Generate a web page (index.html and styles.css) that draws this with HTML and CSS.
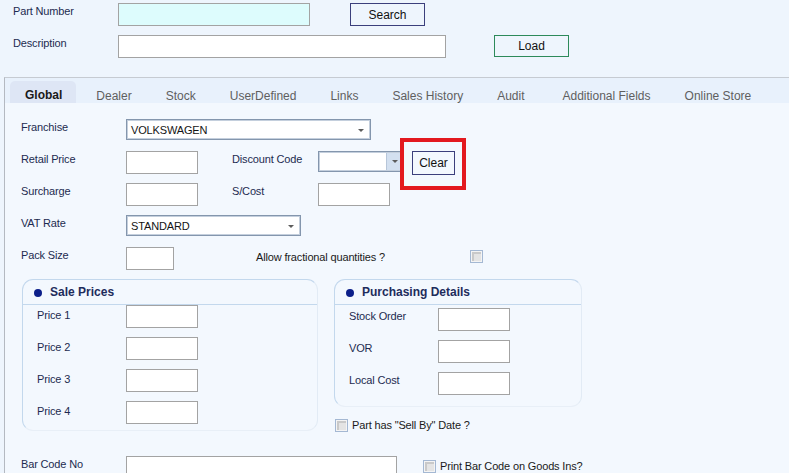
FILE: index.html
```html
<!DOCTYPE html>
<html>
<head>
<meta charset="utf-8">
<link rel="stylesheet" href="styles.css">
</head>
<body>
<div class="top">
  <div class="top-row">
    <div class="top-label">Part Number</div>
    <div class="field field-part"></div>
    <button class="btn btn-search">Search</button>
  </div>
  <div class="top-row">
    <div class="top-label">Description</div>
    <div class="field field-desc"></div>
    <button class="btn btn-load">Load</button>
  </div>
</div>

<div class="panel">
  <div class="tabstrip">
    <div class="tab tab-active">Global</div>
    <div class="tab">Dealer</div>
    <div class="tab">Stock</div>
    <div class="tab">UserDefined</div>
    <div class="tab">Links</div>
    <div class="tab">Sales History</div>
    <div class="tab tab-audit">Audit</div>
    <div class="tab">Additional Fields</div>
    <div class="tab">Online Store</div>
  </div>

  <div class="content">
    <div class="row">
      <div class="lbl">Franchise</div>
      <div class="combo combo-franchise"><span class="combo-text">VOLKSWAGEN</span><span class="arrow"></span></div>
    </div>
    <div class="row">
      <div class="lbl">Retail Price</div>
      <div class="field field-sm"></div>
      <div class="lbl lbl-mid">Discount Code</div>
      <div class="combo combo-discount"><span class="combo-text"></span><span class="drop"><span class="arrow"></span></span></div>
      <button class="btn btn-clear">Clear</button>
    </div>
    <div class="row">
      <div class="lbl">Surcharge</div>
      <div class="field field-sm"></div>
      <div class="lbl lbl-mid">S/Cost</div>
      <div class="field field-sm"></div>
    </div>
    <div class="row">
      <div class="lbl">VAT Rate</div>
      <div class="combo combo-vat"><span class="combo-text">STANDARD</span><span class="arrow"></span></div>
    </div>
    <div class="row">
      <div class="lbl">Pack Size</div>
      <div class="field field-xs"></div>
      <div class="lbl lbl-frac">Allow fractional quantities ?</div>
      <span class="check check-frac"></span>
    </div>

    <div class="groups">
      <div class="group group-sale">
        <div class="group-head"><span class="dot"></span>Sale Prices</div>
        <div class="group-body">
          <div class="grow"><div class="glbl">Price 1</div><div class="field field-sm"></div></div>
          <div class="grow"><div class="glbl">Price 2</div><div class="field field-sm"></div></div>
          <div class="grow"><div class="glbl">Price 3</div><div class="field field-sm"></div></div>
          <div class="grow"><div class="glbl">Price 4</div><div class="field field-sm"></div></div>
        </div>
      </div>
      <div class="col-right">
        <div class="group group-purch">
          <div class="group-head"><span class="dot"></span>Purchasing Details</div>
          <div class="group-body">
            <div class="grow"><div class="glbl glbl-top">Stock Order</div><div class="field field-sm"></div></div>
            <div class="grow"><div class="glbl glbl-top">VOR</div><div class="field field-sm"></div></div>
            <div class="grow"><div class="glbl glbl-top">Local Cost</div><div class="field field-sm"></div></div>
          </div>
        </div>
        <div class="checkrow"><span class="check"></span><span class="check-lbl">Part has "Sell By" Date ?</span></div>
      </div>
    </div>

    <div class="row row-bar">
      <div class="lbl">Bar Code No</div>
      <div class="field field-bar"></div>
      <div class="checkrow checkrow-bar"><span class="check"></span><span class="check-lbl">Print Bar Code on Goods Ins?</span></div>
    </div>
  </div>
</div>

<div class="highlight"></div>
</body>
</html>
```

FILE: styles.css
```css
html, body {
  margin: 0;
  padding: 0;
}
body {
  position: relative;
  width: 789px;
  height: 473px;
  overflow: hidden;
  background: #eef5fd;
  font-family: "Liberation Sans", Arial, sans-serif;
  font-size: 11px;
  letter-spacing: -0.15px;
  color: #1d2b50;
}

/* ---------- top search area ---------- */
.top {
  padding: 3px 0 0 13px;
}
.top-row {
  display: flex;
  align-items: flex-start;
  height: 23px;
}
.top-row + .top-row {
  margin-top: 9px;
}
.top-label {
  width: 105px;
  line-height: 14px;
  margin-top: 1px;
}
.field {
  box-sizing: border-box;
  height: 23px;
  background: #ffffff;
  border: 1px solid #a3a3a3;
  flex: none;
}
.field-part {
  width: 192px;
  background: #ddfcfd;
}
.field-desc {
  width: 328px;
}
.btn {
  box-sizing: border-box;
  font-family: "Liberation Sans", Arial, sans-serif;
  font-size: 12px;
  letter-spacing: 0;
  color: #111;
  background: transparent;
  padding: 0;
  flex: none;
}
.btn-search {
  margin-left: 40px;
  width: 75px;
  height: 23px;
  border: 1px solid #3b3f7c;
}
.btn-load {
  margin-left: 48px;
  width: 75px;
  height: 22px;
  border: 1px solid #2d8a5b;
}

/* ---------- tab panel ---------- */
.panel {
  margin-top: 19px;
  margin-left: 4px;
  border-top: 1px solid #c6cbd2;
  border-left: 1px solid #b4b9c1;
  background: #f3f8fe;
  height: 400px;
}
.tabstrip {
  display: flex;
  align-items: flex-end;
  height: 25px;
  background: #e8f1fc;
  padding-left: 5px;
  font-size: 12px;
  letter-spacing: 0;
  color: #5f5f5f;
}
.tab {
  box-sizing: border-box;
  height: 22px;
  line-height: 14px;
  padding: 8px 17px 0 17px;
  white-space: nowrap;
}
.tab-audit {
  padding-right: 21px;
}
.tab-active {
  padding: 7px 14px 0 15px;
  margin-right: 3px;
  background: #dee6f5;
  border-radius: 5px 5px 0 0;
  font-weight: bold;
  color: #1a1a1a;
}

.content {
  padding: 16px 0 0 16px;
}
.row {
  display: flex;
  align-items: flex-start;
  height: 23px;
  margin-bottom: 9px;
}
.lbl {
  width: 105px;
  line-height: 14px;
  margin-top: 1px;
  flex: none;
}
.lbl-mid {
  width: 86px;
  margin-left: 34px;
}
.lbl-frac {
  width: 214px;
  margin-left: 82px;
  margin-top: 3px;
  color: #1a1a1a;
}
.field-sm {
  width: 72px;
}
.field-xs {
  width: 48px;
}
.field-bar {
  width: 271px;
}

/* combos */
.combo {
  box-sizing: border-box;
  height: 21px;
  border: 1px solid #8496ad;
  box-shadow: inset 0 0 0 1px #c4cfdd;
  background: #ffffff;
  display: flex;
  align-items: center;
  flex: none;
}
.combo-text {
  flex: 1;
  padding-left: 4px;
  font-size: 11px;
  color: #141414;
  line-height: 14px;
}
.combo .arrow {
  width: 0;
  height: 0;
  border-left: 3px solid transparent;
  border-right: 3px solid transparent;
  border-top: 3px solid #5c5c5c;
  margin-right: 6px;
  margin-top: 1px;
}
.combo-franchise {
  width: 245px;
}
.combo-vat {
  width: 175px;
}
.combo-discount {
  width: 86px;
}
.drop {
  align-self: stretch;
  width: 15px;
  margin: 1px 1px 1px 0;
  background: #d3e0f0;
  border-left: 1px solid #b7c6d9;
  display: flex;
  align-items: center;
  justify-content: center;
}
.drop .arrow {
  margin: 0;
}
.btn-clear {
  margin-left: 8px;
  width: 43px;
  height: 24px;
  border: 1px solid #3b3f7c;
}

/* checkboxes */
.check {
  box-sizing: border-box;
  display: inline-block;
  width: 13px;
  height: 13px;
  border: 1px solid #a4b8d3;
  background: #e4e4e4;
  box-shadow: inset 0 0 0 1px #f4f4f4, inset 1px 1px 0 2px #c9c9c9;
  flex: none;
}
.check-frac {
  margin-top: 3px;
}
.checkrow {
  display: flex;
  align-items: center;
}
.check-lbl {
  margin-left: 4px;
  line-height: 14px;
  color: #1a1a1a;
}

/* groups */
.groups {
  display: flex;
  align-items: flex-start;
  margin-left: 1px;
  gap: 16px;
}
.group {
  box-sizing: border-box;
  border: 1px solid #c3d8ed;
  border-right-color: #e2ebf5;
  border-bottom-color: #e8eff7;
  border-radius: 11px;
}
.group-sale {
  width: 296px;
  height: 152px;
}
.group-purch {
  width: 248px;
  height: 128px;
}
.group-head {
  height: 24px;
  border-bottom: 1px solid #c3d8ed;
  display: flex;
  align-items: center;
  padding-left: 11px;
  font-size: 12px;
  font-weight: bold;
  letter-spacing: 0;
  color: #1e2c5c;
}
.dot {
  width: 8px;
  height: 8px;
  border-radius: 50%;
  background: #0c1f8a;
  margin-right: 8px;
  margin-top: 1px;
}
.group-body {
  padding-left: 14px;
}
.group-purch .group-body {
  padding-top: 3px;
}
.grow {
  display: flex;
  align-items: flex-start;
  height: 23px;
  margin-bottom: 9px;
}
.glbl {
  width: 89px;
  line-height: 14px;
  margin-top: 3px;
  flex: none;
}
.glbl-top {
  margin-top: 1px;
}
.col-right .checkrow {
  margin-top: 11px;
  margin-left: 1px;
}

.row-bar {
  margin-top: 24px;
}
.checkrow-bar {
  margin-left: 26px;
  margin-top: 3px;
}

/* annotation overlay */
.highlight {
  position: absolute;
  left: 400px;
  top: 138px;
  width: 66px;
  height: 52px;
  box-sizing: border-box;
  border: 4px solid #e3191f;
}
```
